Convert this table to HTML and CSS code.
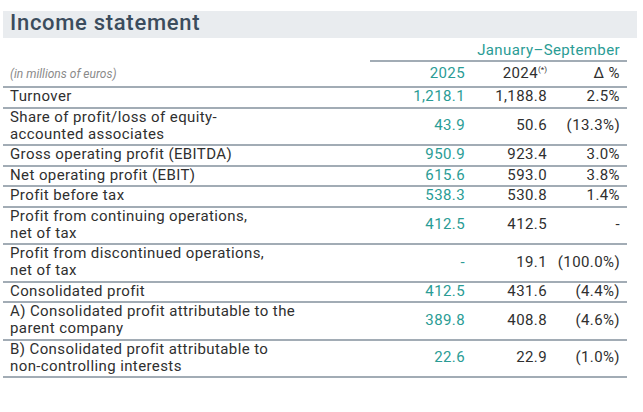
FILE: index.html
```html
<!DOCTYPE html>
<html lang="en">
<head>
<meta charset="utf-8">
<title>Income statement</title>
<link rel="stylesheet" href="styles.css">
</head>
<body>
<div class="page">
  <h1 class="title">Income statement</h1>
  <div class="table">
    <div class="period-row"><div class="period">January–September</div></div>
    <div class="row head">
      <div class="label unit">(in millions of euros)</div>
      <div class="num cur">2025</div>
      <div class="num">2024<sup class="note">(*)</sup></div>
      <div class="num">Δ %</div>
    </div>
    <div class="row"><div class="label">Turnover</div><div class="num cur">1,218.1</div><div class="num">1,188.8</div><div class="num">2.5%</div></div>
    <div class="row"><div class="label">Share of profit/loss of equity-<br>accounted associates</div><div class="num cur">43.9</div><div class="num">50.6</div><div class="num">(13.3%)</div></div>
    <div class="row"><div class="label">Gross operating profit (EBITDA)</div><div class="num cur">950.9</div><div class="num">923.4</div><div class="num">3.0%</div></div>
    <div class="row"><div class="label">Net operating profit (EBIT)</div><div class="num cur">615.6</div><div class="num">593.0</div><div class="num">3.8%</div></div>
    <div class="row"><div class="label">Profit before tax</div><div class="num cur">538.3</div><div class="num">530.8</div><div class="num">1.4%</div></div>
    <div class="row"><div class="label">Profit from continuing operations,<br>net of tax</div><div class="num cur">412.5</div><div class="num">412.5</div><div class="num">-</div></div>
    <div class="row"><div class="label">Profit from discontinued operations,<br>net of tax</div><div class="num cur">-</div><div class="num">19.1</div><div class="num">(100.0%)</div></div>
    <div class="row"><div class="label">Consolidated profit</div><div class="num cur">412.5</div><div class="num">431.6</div><div class="num">(4.4%)</div></div>
    <div class="row"><div class="label">A) Consolidated profit attributable to the<br>parent company</div><div class="num cur">389.8</div><div class="num">408.8</div><div class="num">(4.6%)</div></div>
    <div class="row"><div class="label">B) Consolidated profit attributable to<br>non-controlling interests</div><div class="num cur">22.6</div><div class="num">22.9</div><div class="num">(1.0%)</div></div>
  </div>
</div>
</body>
</html>
```

FILE: styles.css
```css
html, body {
  margin: 0;
  padding: 0;
  background: #ffffff;
}

body {
  font-family: Roboto, "Liberation Sans", Arial, sans-serif;
  color: #2f2f2f;
}

.page {
  padding: 11px 0 0 3px;
}

.title {
  margin: 0;
  width: 634px;
  box-sizing: border-box;
  padding: 0 0 3px 7px;
  background: #e9ecef;
  color: #3b4c5d;
  font-size: 22px;
  font-weight: 500;
  line-height: 24px;
  letter-spacing: 0.7px;
}

.table {
  width: 624px;
}

.period-row {
  display: flex;
  justify-content: flex-end;
}

.period {
  width: 257px;
  box-sizing: border-box;
  padding: 4px 7px 1px 0;
  border-bottom: 2px solid #a2acb5;
  text-align: right;
  color: #2a9c95;
  font-size: 15px;
  line-height: 17px;
  letter-spacing: 0.4px;
}

.row {
  display: grid;
  grid-template-columns: 1fr 90px 82px 73px;
  align-items: center;
  padding: 0 7px 1.5px 7px;
  border-bottom: 2px solid #a2acb5;
  font-size: 15px;
  line-height: 17px;
  letter-spacing: 0.4px;
}

.row.head {
  padding-top: 3px;
  padding-bottom: 3px;
  align-items: baseline;
}

.label {
  white-space: nowrap;
}

.unit {
  font-style: italic;
  font-size: 12px;
  letter-spacing: 0;
  color: #8a8a8a;
}

.num {
  text-align: right;
}

.cur {
  color: #2a9c95;
}

.note {
  font-size: 8px;
  line-height: 0;
  letter-spacing: 0;
  vertical-align: 6px;
}
```
